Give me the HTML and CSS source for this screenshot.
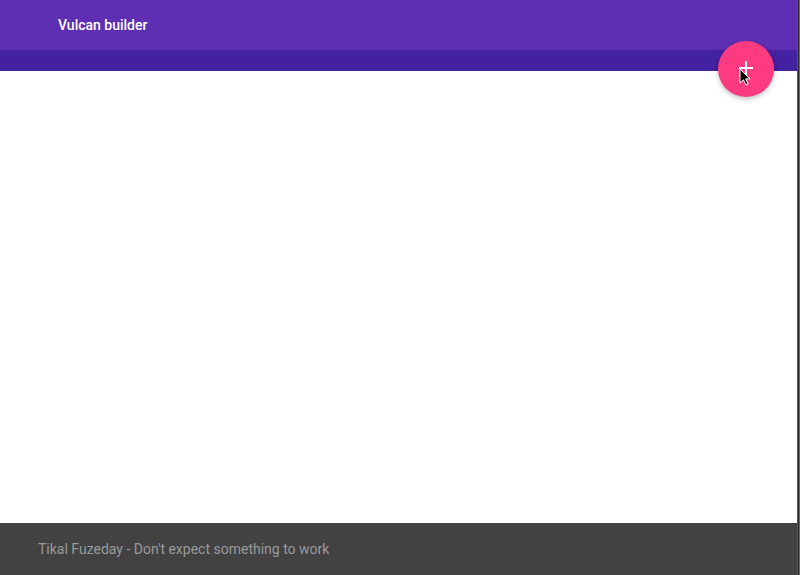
FILE: index.html
```html
<!DOCTYPE html>
<html>
<head>
<meta charset="utf-8">
<title>Vulcan builder</title>
<link rel="stylesheet" href="styles.css">
</head>
<body>
<div class="app">
  <header class="header">
    <div class="toolbar"><span class="title">Vulcan builder</span></div>
    <div class="band"></div>
  </header>
  <main class="content"></main>
  <footer class="footer">Tikal Fuzeday - Don't expect something to work</footer>
  <button class="fab" aria-label="Add">
    <svg width="16" height="16" viewBox="0 0 16 16"><path d="M8 1v14M1 8h14" stroke="#fff" stroke-width="2"/></svg>
  </button>
  <svg class="cursor" width="12" height="18" viewBox="0 0 12 18"><path d="M1 1v14l3.5-3.2 2.4 5.2 2.2-1-2.4-5.1H11z" fill="#000" stroke="#fff" stroke-width="1"/></svg>
</div>
<div class="edge"></div>
</body>
</html>
```
FILE: styles.css
```css
html, body {
  margin: 0;
  padding: 0;
  height: 100%;
}
body {
  display: flex;
  font-family: Roboto, "Liberation Sans", sans-serif;
  background: #fff;
  overflow: hidden;
}
.app {
  position: relative;
  flex: 1;
  display: flex;
  flex-direction: column;
  height: 575px;
}
.toolbar {
  height: 50px;
  background: #5e2eb3;
  display: flex;
  align-items: center;
  padding-left: 58px;
}
.title {
  color: #fff;
  font-size: 14px;
  font-weight: 500;
}
.band {
  height: 21px;
  background: #4421a1;
}
.content {
  flex: 1;
  background: #fff;
}
.footer {
  height: 52px;
  background: #424242;
  color: #9a9a9a;
  font-size: 14px;
  display: flex;
  align-items: center;
  padding-left: 38px;
}
.fab {
  position: absolute;
  left: 718px;
  top: 41px;
  width: 56px;
  height: 56px;
  border-radius: 50%;
  border: none;
  background: #fe3a80;
  box-shadow: 0 2px 5px rgba(0,0,0,0.26);
  display: flex;
  align-items: center;
  justify-content: center;
  padding: 0;
  padding-bottom: 2px;
}
.fab svg { display: block; }
.cursor {
  position: absolute;
  left: 739px;
  top: 68px;
}
.edge {
  width: 3px;
  height: 575px;
  background: linear-gradient(to right, #6b6b6b, #2a2a2a, #8a8a8a);
}
```
